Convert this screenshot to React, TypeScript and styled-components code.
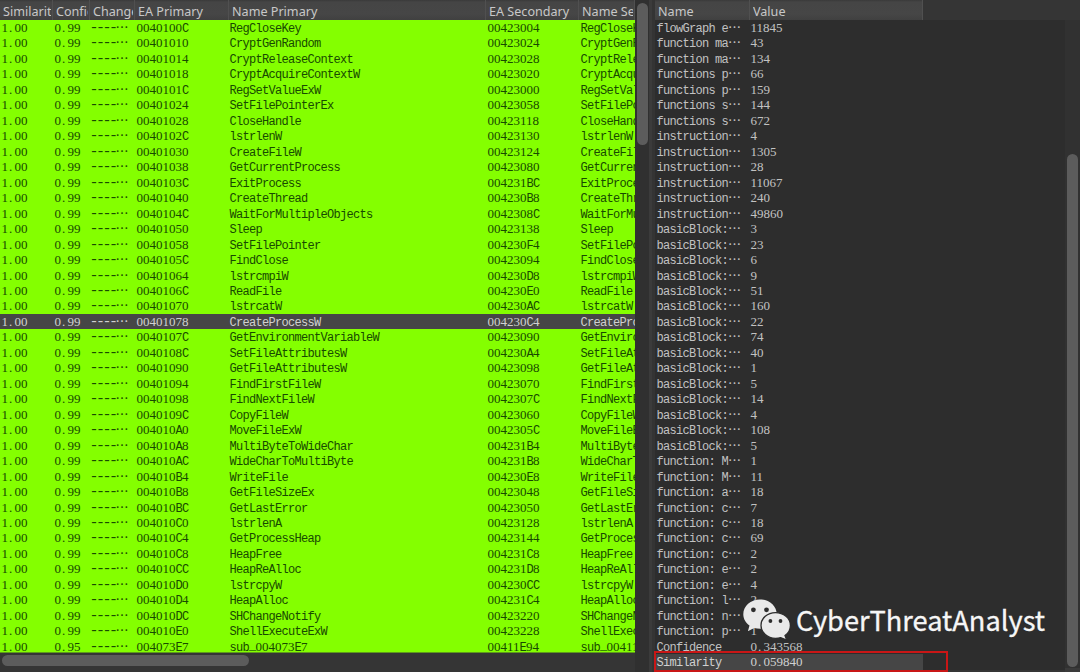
import React from "react";
import styled, { createGlobalStyle } from "styled-components";

const Global = createGlobalStyle`
  * { box-sizing: border-box; }
  body { margin: 0; background: #353535; overflow: hidden; }
`;

const Screen = styled.div`
  position: relative;
  width: 1080px;
  height: 672px;
  display: flex;
  overflow: hidden;
  background: #353535;
`;

const Matches = styled.section`
  width: 635px;
  height: 672px;
  display: flex;
  flex-direction: column;
  overflow: hidden;
`;

const HeaderRow = styled.div<{ $width: number }>`
  display: flex;
  width: ${(p) => p.$width}px;
  height: 20px;
  flex: none;
  background: linear-gradient(#3a3a3a 0, #454545 2px, #464646 14px, #404040 100%);
  overflow: hidden;
`;

const HeaderCell = styled.div<{ $width: number }>`
  flex: none;
  width: ${(p) => p.$width}px;
  height: 20px;
  padding: 2px 1px 0 3px;
  border-right: 1px solid #505050;
  white-space: nowrap;
  font: 12.6px/20px "Noto Sans", sans-serif;
  color: #c8c8c8;
`;

const HeaderLabel = styled.div`
  overflow: hidden;
  height: 18px;
`;

const MatchBody = styled.div`
  height: 633px;
  flex: none;
  overflow: hidden;
  background: #84ff00;
  border-bottom: 1px solid #5f9a1c;
`;

const Row = styled.div<{ $selected?: boolean; $color: string; $width?: number }>`
  display: flex;
  height: 15.475px;
  width: ${(p) => (p.$width ? `${p.$width}px` : "auto")};
  background: ${(p) => (p.$selected ? "#464646" : "transparent")};
  color: ${(p) => (p.$selected ? "#d0d0d0" : p.$color)};
  font: 12px/18.2px "Liberation Mono", monospace;
  letter-spacing: -0.7px;
`;

const Cell = styled.div<{ $width: number }>`
  flex: none;
  width: ${(p) => p.$width}px;
  height: 18px;
  padding-left: 1.5px;
  overflow: hidden;
  white-space: pre;
`;

const Digits = styled.span`
  font: 13px/1px "Liberation Serif", serif;
  letter-spacing: 0;
`;

const Underscore = styled.span`
  vertical-align: 2px;
  line-height: 1px;
`;

const Dot = styled.span`
  margin: 0 2.25px 0 1px;
`;

const Dashes = styled.span`
  font-size: 15px;
  letter-spacing: -2.5px;
  line-height: 1px;
  margin-left: -1px;
`;

const Ellipsis = styled.span`
  display: inline-block;
  font: 13px/1px "Noto Sans CJK SC", sans-serif;
  letter-spacing: 0;
`;

const BottomTrack = styled.div`
  height: 19px;
  padding: 2px 0 0 2px;
`;

const HorizontalThumb = styled.div`
  width: 247px;
  height: 11px;
  border-radius: 6px;
  background: #5c5c5c;
`;

const Gutter = styled.div`
  width: 20px;
  height: 672px;
  flex: none;
  background: linear-gradient(to right, #303030 0 14px, #3b3b3b 14px 17px, #343434 17px);
  padding: 3px 0 0 2px;
`;

const VerticalThumb = styled.div<{ $height: number }>`
  width: 11px;
  height: ${(p) => p.$height}px;
  border-radius: 6px;
  background: #5c5c5c;
`;

const Stats = styled.section`
  width: 410px;
  height: 672px;
  flex: none;
`;

const StatsBody = styled.div`
  width: 410px;
  height: 650px;
  background: #2d2d2d;
`;

const StatsTrack = styled.div`
  width: 15px;
  height: 672px;
  flex: none;
  padding: 154px 0 0 1.5px;
  background: linear-gradient(#353535 0 20px, #313131 20px 668px, #3a3a3a 668px);
`;

const RedFrame = styled.div`
  position: absolute;
  left: 654px;
  top: 651px;
  width: 294px;
  height: 21px;
  border: 2px solid #c91616;
`;

const Watermark = styled.div`
  position: absolute;
  left: 742px;
  top: 598px;
  display: flex;
  align-items: center;
  gap: 4px;
  height: 44px;
`;

const WatermarkText = styled.span`
  font: 27.2px/44px "Noto Sans CJK SC", sans-serif;
  color: #f6f6f6;
  -webkit-text-stroke: 0.3px #f6f6f6;
  white-space: nowrap;
  margin-top: -2px;
`;

const matches = (
  "0040100C RegCloseKey 00423004|00401010 CryptGenRandom 00423024|00401014 CryptReleaseContext 00423028|" +
  "00401018 CryptAcquireContextW 00423020|0040101C RegSetValueExW 00423000|00401024 SetFilePointerEx 00423058|" +
  "00401028 CloseHandle 00423118|0040102C lstrlenW 00423130|00401030 CreateFileW 00423124|" +
  "00401038 GetCurrentProcess 00423080|0040103C ExitProcess 004231BC|00401040 CreateThread 004230B8|" +
  "0040104C WaitForMultipleObjects 0042308C|00401050 Sleep 00423138|00401058 SetFilePointer 004230F4|" +
  "0040105C FindClose 00423094|00401064 lstrcmpiW 004230D8|0040106C ReadFile 004230E0|00401070 lstrcatW 004230AC|" +
  "00401078 CreateProcessW 004230C4|0040107C GetEnvironmentVariableW 00423090|0040108C SetFileAttributesW 004230A4|" +
  "00401090 GetFileAttributesW 00423098|00401094 FindFirstFileW 00423070|00401098 FindNextFileW 0042307C|" +
  "0040109C CopyFileW 00423060|004010A0 MoveFileExW 0042305C|004010A8 MultiByteToWideChar 004231B4|" +
  "004010AC WideCharToMultiByte 004231B8|004010B4 WriteFile 004230E8|004010B8 GetFileSizeEx 00423048|" +
  "004010BC GetLastError 00423050|004010C0 lstrlenA 00423128|004010C4 GetProcessHeap 00423144|" +
  "004010C8 HeapFree 004231C8|004010CC HeapReAlloc 004231D8|004010D0 lstrcpyW 004230CC|004010D4 HeapAlloc 004231C4|" +
  "004010DC SHChangeNotify 00423220|004010E0 ShellExecuteExW 00423228|004073E7 sub_004073E7 00411E94"
)
  .split("|")
  .map((line) => line.split(" "));

const stats: [string, string][] = [
  ["flowGraph e…", "11845"],
  ["function ma…", "43"],
  ["function ma…", "134"],
  ["functions p…", "66"],
  ["functions p…", "159"],
  ["functions s…", "144"],
  ["functions s…", "672"],
  ["instruction…", "4"],
  ["instruction…", "1305"],
  ["instruction…", "28"],
  ["instruction…", "11067"],
  ["instruction…", "240"],
  ["instruction…", "49860"],
  ["basicBlock:…", "3"],
  ["basicBlock:…", "23"],
  ["basicBlock:…", "6"],
  ["basicBlock:…", "9"],
  ["basicBlock:…", "51"],
  ["basicBlock:…", "160"],
  ["basicBlock:…", "22"],
  ["basicBlock:…", "74"],
  ["basicBlock:…", "40"],
  ["basicBlock:…", "1"],
  ["basicBlock:…", "5"],
  ["basicBlock:…", "14"],
  ["basicBlock:…", "4"],
  ["basicBlock:…", "108"],
  ["basicBlock:…", "5"],
  ["function: M…", "1"],
  ["function: M…", "11"],
  ["function: a…", "18"],
  ["function: c…", "7"],
  ["function: c…", "18"],
  ["function: c…", "69"],
  ["function: c…", "2"],
  ["function: e…", "2"],
  ["function: e…", "4"],
  ["function: l…", "2"],
  ["function: n…", "4"],
  ["function: p…", "1"],
  ["Confidence", "0.343568"],
  ["Similarity", "0.059840"],
];

const Decimal = ({ value }: { value: string }) => {
  const [whole, fraction] = value.split(".");
  return (
    <Digits>
      {whole}
      {fraction !== undefined && (
        <>
          <Dot>.</Dot>
          {fraction}
        </>
      )}
    </Digits>
  );
};

/* Digits use the serif numerals; the letters stay in the row's monospace. */
const Mixed = ({ text }: { text: string }) => (
  <>
    {text
      .split(/(\d+|_)/)
      .filter(Boolean)
      .map((part, i) => {
        if (part === "_") return <Underscore key={i}>_</Underscore>;
        return /\d/.test(part) ? <Digits key={i}>{part}</Digits> : part;
      })}
  </>
);

const Elided = ({ text }: { text: string }) =>
  text.endsWith("…") ? (
    <>
      {text.slice(0, -1)}
      <Ellipsis>…</Ellipsis>
    </>
  ) : (
    <>{text}</>
  );

const Header = ({ width, children }: { width: number; children: string }) => (
  <HeaderCell $width={width}>
    <HeaderLabel>{children}</HeaderLabel>
  </HeaderCell>
);

const WeChatLogo = () => (
  <svg width="50" height="44" viewBox="0 0 50 44">
    <path
      fill="#e9e9e9"
      d="M18 1.500C8.600 1.500 1.300 8 1.300 16.200c0 4.600 2.400 8.600 6.200 11.200l-1.600 5.900 6.200-3.300c2 .6 4 .8 6.200.8C28 30.800 34.700 24.300 34.700 16.200S27.300 1.500 18 1.500Z"
    />
    <path
      fill="#e9e9e9"
      stroke="#2d2d2d"
      strokeWidth="1.300"
      d="M33.500 14.600c-8 0-14.500 5.600-14.500 12.800s6.400 13 14.500 13c1.900 0 3.600-.2 5.200-.8l6 2.400-1.700-4.500c3.300-2.300 5.400-5.900 5.400-10.100 0-7.200-6.800-12.800-14.900-12.800Z"
    />
    <g fill="#2d2d2d">
      <circle cx="11.400" cy="11.800" r="2.400" />
      <circle cx="24.500" cy="11.800" r="2.400" />
      <circle cx="28.400" cy="23" r="1.900" />
      <circle cx="38.500" cy="23" r="1.900" />
    </g>
  </svg>
);

export default function App() {
  return (
    <Screen>
      <Global />
      <Matches>
        <HeaderRow $width={635}>
          <Header width={53}>Similarity</Header>
          <Header width={37}>Confidence</Header>
          <Header width={45}>Change</Header>
          <Header width={94}>EA Primary</Header>
          <Header width={257}>Name Primary</Header>
          <Header width={93}>EA Secondary</Header>
          <Header width={56}>Name Secondary</Header>
        </HeaderRow>
        <MatchBody>
          {matches.map(([ea, name, secondary], i) => (
            <Row key={ea} $color="#174a00" $selected={name === "CreateProcessW"}>
              <Cell $width={53}>
                <Decimal value="1.00" />
              </Cell>
              <Cell $width={36}>
                <Decimal value={i === matches.length - 1 ? "0.95" : "0.99"} />
              </Cell>
              <Cell $width={46}>
                <Dashes>----</Dashes>
                <Ellipsis>…</Ellipsis>
              </Cell>
              <Cell $width={93}>
                <Mixed text={ea} />
              </Cell>
              <Cell $width={258}>
                <Mixed text={name} />
              </Cell>
              <Cell $width={93}>
                <Mixed text={secondary} />
              </Cell>
              <Cell $width={56}>
                <Mixed text={i === matches.length - 1 ? "sub_00411E94" : name} />
              </Cell>
            </Row>
          ))}
        </MatchBody>
        <BottomTrack>
          <HorizontalThumb />
        </BottomTrack>
      </Matches>
      <Gutter>
        <VerticalThumb $height={142} />
      </Gutter>
      <Stats>
        <HeaderRow $width={268}>
          <Header width={95}>Name</Header>
          <Header width={173}>Value</Header>
        </HeaderRow>
        <StatsBody>
          {stats.map(([name, value], i) => (
            <Row key={i} $color="#c2c2c2" $selected={name === "Similarity"} $width={268}>
              <Cell $width={94}>
                <Elided text={name} />
              </Cell>
              <Cell $width={174}>
                <Decimal value={value} />
              </Cell>
            </Row>
          ))}
        </StatsBody>
      </Stats>
      <StatsTrack>
        <VerticalThumb $height={513} />
      </StatsTrack>
      <RedFrame />
      <Watermark>
        <WeChatLogo />
        <WatermarkText>CyberThreatAnalyst</WatermarkText>
      </Watermark>
    </Screen>
  );
}
